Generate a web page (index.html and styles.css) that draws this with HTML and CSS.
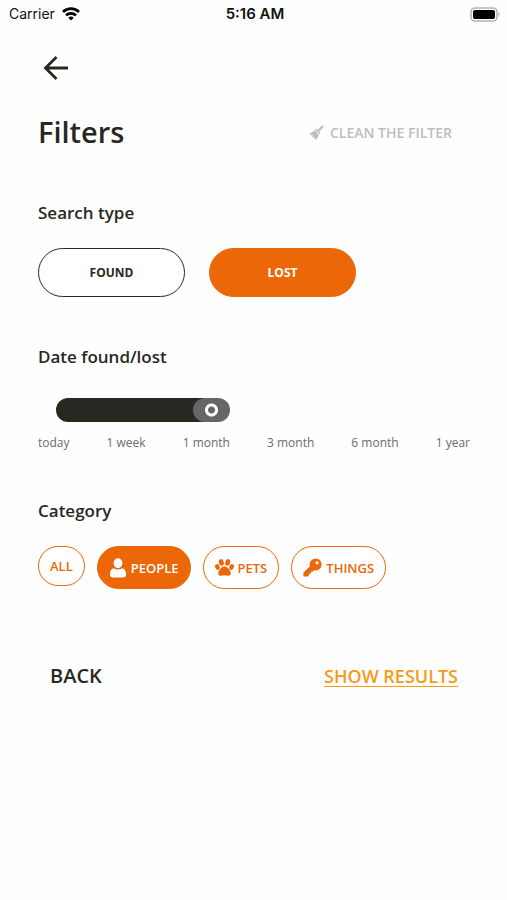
FILE: index.html
```html
<!DOCTYPE html>
<html lang="en">
<head>
<meta charset="utf-8">
<meta name="viewport" content="width=device-width, initial-scale=1">
<title>Filters</title>
<link rel="stylesheet" href="styles.css">
</head>
<body>
<header class="status">
  <div class="carrier">
    <span>Carrier</span>
    <svg width="18" height="14" viewBox="0 0 18 14" aria-hidden="true"><g fill="none" stroke="#000" stroke-width="2.7"><path d="M1 5A11.4 11.4 0 0 1 17 5"/><path d="M4 8.4A7.2 7.2 0 0 1 14 8.4"/></g><path d="M9 13.6L6.3 10.8A3.9 3.9 0 0 1 11.7 10.8Z"/></svg>
  </div>
  <span class="time">5:16 AM</span>
  <svg class="battery" width="31" height="15" viewBox="0 0 31 15" aria-hidden="true"><rect x="1" y="1" width="26" height="13" rx="4" fill="#fff" stroke="#b4b4b4" stroke-width="1.6"/><rect x="3" y="3" width="22" height="9" rx="2"/><path d="M28.5 5Q31 7.5 28.5 10Z" fill="#b4b4b4"/></svg>
</header>
<main class="page">
  <button class="plain arrow" type="button" aria-label="Go back">
    <svg width="26" height="26" viewBox="0 0 26 26" fill="none" stroke="#282823" stroke-width="2.8" aria-hidden="true"><path d="M25 13H3M13.5 2L2.5 13L13.5 24"/></svg>
  </button>
  <div class="title-row">
    <h1>Filters</h1>
    <button class="plain clean" type="button">
      <svg width="15" height="15" viewBox="0 0 15 15" fill="#bdbdbd" aria-hidden="true"><path d="M13.2.2L14.8 1.8L10.3 6.4L8.7 4.8Z"/><path d="M7.2 3.5L11.5 7.8L10.3 9L6 4.7Z"/><path d="M5.4 5.2L9.8 9.6Q9.5 12.4 6.7 14.8L5.3 13.4L6.2 11.9L4.5 12.7L3.1 11.3L4.3 9.8L2.5 10.6L.5 8.7Q3.5 7.8 5.4 5.2Z"/></svg>
      CLEAN THE FILTER
    </button>
  </div>

  <section class="types">
    <h2>Search type</h2>
    <div class="type-row">
      <button class="type" type="button" aria-pressed="false">FOUND</button>
      <button class="type selected" type="button" aria-pressed="true">LOST</button>
    </div>
  </section>

  <section class="dates">
    <h2><label for="date">Date found/lost</label></h2>
    <input class="range" id="date" type="range" min="0" max="5" value="2">
    <div class="ticks">
      <span>today</span><span>1 week</span><span>1 month</span><span>3 month</span><span>6 month</span><span>1 year</span>
    </div>
  </section>

  <section class="categories">
    <h2>Category</h2>
    <div class="chips">
      <button class="chip short" type="button">ALL</button>
      <button class="chip selected" type="button">
        <svg width="18" height="20" viewBox="0 0 18 20" fill="currentColor" aria-hidden="true"><ellipse cx="9" cy="5.2" rx="4.4" ry="5"/><path d="M4.5 10.2Q9 13 13.5 10.2Q17 11.2 17 16.5Q17 19.5 14 19.5H4Q1 19.5 1 16.5Q1 11.2 4.5 10.2Z"/></svg>
        PEOPLE
      </button>
      <button class="chip" type="button">
        <svg width="19" height="17" viewBox="0 0 19 17" fill="currentColor" aria-hidden="true"><ellipse cx="6.3" cy="3.4" rx="2.5" ry="3.3" transform="rotate(-12 6.3 3.4)"/><ellipse cx="12.7" cy="3.4" rx="2.5" ry="3.3" transform="rotate(12 12.7 3.4)"/><ellipse cx="2.4" cy="8" rx="2.2" ry="2.9" transform="rotate(-22 2.4 8)"/><ellipse cx="16.6" cy="8" rx="2.2" ry="2.9" transform="rotate(22 16.6 8)"/><path d="M9.5 7.4C12.8 7.4 15.8 11.8 15.8 14.5C15.8 18 12 16.3 9.5 16.3S3.2 18 3.2 14.5C3.2 11.8 6.2 7.4 9.5 7.4Z"/></svg>
        PETS
      </button>
      <button class="chip" type="button">
        <svg width="19" height="19" viewBox="0 0 20 20" fill="currentColor" aria-hidden="true"><path fill-rule="evenodd" d="M13.3.4A6.4 6.4 0 1 1 11.6 13L9.9 14.6H8.3V16.5H6.3V18.2L5 19.5H1.2Q.4 19.5.4 18.7V15.4L7.3 8.6A6.4 6.4 0 0 1 13.3.4ZM14.8 3.4A1.7 1.7 0 1 0 14.8 6.8A1.7 1.7 0 1 0 14.8 3.4Z"/></svg>
        THINGS
      </button>
    </div>
  </section>

  <footer class="actions">
    <button class="plain back" type="button">BACK</button>
    <a class="results" href="#results">SHOW RESULTS</a>
  </footer>
</main>
</body>
</html>
```
FILE: styles.css
```css
* { box-sizing: border-box; }

body {
  margin: 0;
  background: #fefefe;
  color: #282823;
  font-family: "Open Sans", "Noto Sans", sans-serif;
}

h1, h2 { margin: 0; font-weight: 600; }
h1 { font-size: 29px; line-height: 40px; }
h2 { font-size: 17px; line-height: 24px; }

button { font-family: inherit; cursor: pointer; }

.plain {
  padding: 0;
  border: 0;
  background: none;
  color: inherit;
}

.status {
  display: grid;
  grid-template-columns: 1fr auto 1fr;
  align-items: center;
  height: 28px;
  padding: 0 6px 0 9px;
  color: #111;
  font: 14px/28px Inter, sans-serif;
}

.carrier { display: flex; align-items: center; gap: 7px; }
.time { font-size: 15px; font-weight: 600; }
.battery { justify-self: end; }

.page { padding: 27px 37px 24px 38px; }

.arrow { display: flex; margin-left: 5px; }

.title-row {
  display: flex;
  align-items: center;
  justify-content: space-between;
  margin-top: 31px;
  padding-right: 18px;
}

.clean {
  display: flex;
  align-items: center;
  gap: 6px;
  color: #bdbdbd;
  font-size: 14px;
  font-weight: 600;
}

.types { margin-top: 49px; }

.type-row { display: flex; gap: 24px; margin-top: 23px; }

.type {
  width: 147px;
  height: 49px;
  border: 1px solid #282823;
  border-radius: 25px;
  background: #fff;
  color: #282823;
  font-size: 12px;
  font-weight: 700;
}

.type.selected,
.chip.selected {
  border-color: #ec6707;
  background: #ec6707;
  color: #fff;
}

.dates { margin-top: 48px; }

.range {
  display: block;
  width: calc(100% - 53px);
  height: 24px;
  margin: 29px 0 0 18px;
  border-radius: 12px;
  background: linear-gradient(to right, #282823 41%, transparent 41%);
  appearance: none;
}

.range::-webkit-slider-thumb {
  width: 37px;
  height: 24px;
  border-radius: 12px;
  background: radial-gradient(circle, #666 3px, #fff 4px, #fff 6px, #666 7px);
  appearance: none;
}

.ticks {
  display: flex;
  justify-content: space-between;
  margin-top: 13px;
  color: #6b6b69;
  font-size: 12px;
  line-height: 16px;
}

.categories { margin-top: 48px; }

.chips {
  display: flex;
  align-items: flex-start;
  gap: 12px;
  margin-top: 23px;
}

.chip {
  display: flex;
  align-items: center;
  gap: 4px;
  height: 43px;
  padding: 0 11px;
  border: 1px solid #ec6707;
  border-radius: 22px;
  background: #fff;
  color: #ec6707;
  font-size: 13px;
  font-weight: 600;
}

.chip.short { height: 40px; }

.actions {
  display: flex;
  align-items: center;
  justify-content: space-between;
  margin-top: 73px;
  padding: 0 12px;
  font-size: 18px;
  line-height: 24px;
  font-weight: 600;
}

.back { font-size: 20px; font-weight: 600; }

.results {
  color: #f99a16;
  text-decoration-thickness: 1px;
  text-underline-offset: 3px;
}
```
